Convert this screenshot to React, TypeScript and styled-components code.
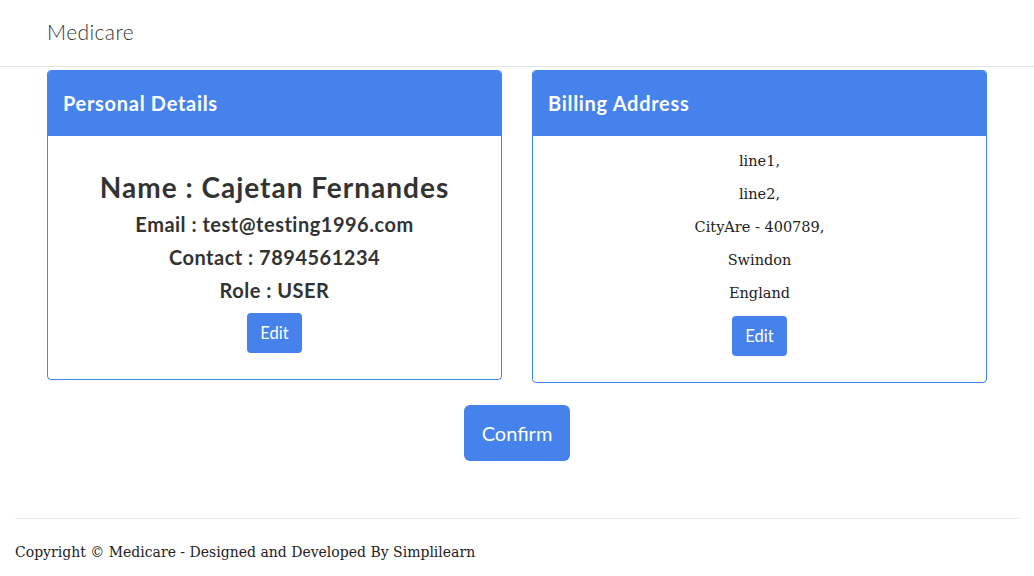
import React from "react";
import styled, { createGlobalStyle } from "styled-components";

const GlobalStyle = createGlobalStyle`
  html, body { margin: 0; padding: 0; background: #fff; }
  body { font-family: Lato, "Open Sans", sans-serif; color: #333; }
  * { box-sizing: border-box; }
`;

const primary = "#4582ec";

const NavBar = styled.nav`
  height: 67px;
  border-bottom: 1px solid #e2e2e2;
  display: flex;
  align-items: center;
  padding: 0 47px;
`;

const Brand = styled.div`
  font-family: Lato, sans-serif;
  font-weight: 300;
  font-size: 21px;
  letter-spacing: 0.4px;
  color: #333;
  padding-bottom: 4px;
`;

const Main = styled.main`
  width: 940px;
  margin: 3px 0 0 47px;
`;

const CardGrid = styled.div`
  display: grid;
  grid-template-columns: 1fr 1fr;
  column-gap: 30px;
  align-items: start;
`;

const Card = styled.section`
  border: 1px solid ${primary};
  border-radius: 4px;
  overflow: hidden;
  background: #fff;
`;

const CardHeader = styled.header`
  height: 65px;
  background: ${primary};
  display: flex;
  align-items: center;
  padding: 0 15px 2px;
`;

const CardTitle = styled.h2`
  margin: 0;
  color: #fff;
  font-family: Lato, sans-serif;
  font-weight: 700;
  font-size: 20px;
  letter-spacing: 0.7px;
`;

const CardBody = styled.div<{ $top: number }>`
  display: flex;
  flex-direction: column;
  align-items: center;
  padding: ${(p) => p.$top}px 20px 26px;
`;

const NameLine = styled.h3`
  margin: 0;
  font-family: Lato, sans-serif;
  font-weight: 700;
  font-size: 28px;
  letter-spacing: 1px;
  line-height: 42px;
  color: #333;
`;

const InfoLine = styled.h4`
  margin: 0;
  font-family: Lato, sans-serif;
  font-weight: 700;
  font-size: 20px;
  letter-spacing: 0.5px;
  line-height: 33px;
  color: #333;
`;

const AddressLine = styled.p`
  margin: 0;
  font-family: "DejaVu Serif", Georgia, serif;
  font-size: 14.5px;
  line-height: 33px;
  color: #222;
`;

const Button = styled.button<{ $size?: "lg" }>`
  border: none;
  border-radius: ${(p) => (p.$size === "lg" ? 6 : 4)}px;
  background: ${primary};
  color: #fff;
  font-family: Lato, sans-serif;
  font-weight: 400;
  font-size: ${(p) => (p.$size === "lg" ? 20 : 16.5)}px;
  width: ${(p) => (p.$size === "lg" ? 106 : 55)}px;
  height: ${(p) => (p.$size === "lg" ? 56 : 40)}px;
  padding: 0;
  cursor: pointer;
`;

const EditButton = styled(Button)<{ $gap: number }>`
  margin-top: ${(p) => p.$gap}px;
`;

const ConfirmRow = styled.div`
  display: flex;
  justify-content: center;
  margin-top: 22px;
`;

const Footer = styled.footer`
  margin: 57px 15px 0;
`;

const Rule = styled.hr`
  margin: 0;
  border: none;
  border-top: 1px solid #eaeaea;
`;

const Copyright = styled.p`
  margin: 0;
  padding-top: 25px;
  font-family: "DejaVu Serif", Georgia, serif;
  font-size: 14px;
  color: #222;
`;

export default function App() {
  return (
    <>
      <GlobalStyle />
      <NavBar>
        <Brand>Medicare</Brand>
      </NavBar>
      <Main>
        <CardGrid>
          <Card>
            <CardHeader>
              <CardTitle>Personal Details</CardTitle>
            </CardHeader>
            <CardBody $top={30}>
              <NameLine>Name : Cajetan Fernandes</NameLine>
              <InfoLine>Email : test@testing1996.com</InfoLine>
              <InfoLine>Contact : 7894561234</InfoLine>
              <InfoLine>Role : USER</InfoLine>
              <EditButton $gap={6}>Edit</EditButton>
            </CardBody>
          </Card>
          <Card>
            <CardHeader>
              <CardTitle>Billing Address</CardTitle>
            </CardHeader>
            <CardBody $top={9}>
              <AddressLine>line1,</AddressLine>
              <AddressLine>line2,</AddressLine>
              <AddressLine>CityAre - 400789,</AddressLine>
              <AddressLine>Swindon</AddressLine>
              <AddressLine>England</AddressLine>
              <EditButton $gap={6}>Edit</EditButton>
            </CardBody>
          </Card>
        </CardGrid>
        <ConfirmRow>
          <Button $size="lg">Confirm</Button>
        </ConfirmRow>
      </Main>
      <Footer>
        <Rule />
        <Copyright>Copyright © Medicare - Designed and Developed By Simplilearn</Copyright>
      </Footer>
    </>
  );
}
